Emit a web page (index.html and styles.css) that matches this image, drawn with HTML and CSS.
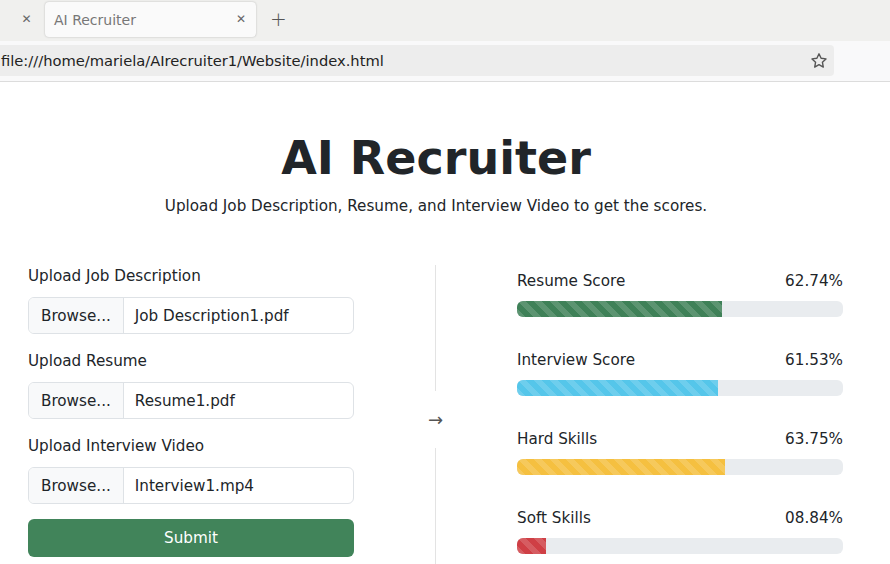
FILE: index.html
```html
<!DOCTYPE html>
<html lang="en">
<head>
<meta charset="utf-8">
<title>AI Recruiter</title>
<link rel="stylesheet" href="styles.css">
</head>
<body>
<div class="chrome">
  <div class="tabbar">
    <span class="tab-x prev">&#x2715;</span>
    <div class="tab">
      <span class="tab-title">AI Recruiter</span>
      <span class="tab-x">&#x2715;</span>
    </div>
    <span class="tab-plus">+</span>
  </div>
  <div class="navbar">
    <div class="urlbox">
      <span class="url">file:///home/mariela/AIrecruiter1/Website/index.html</span>
      <svg class="star" width="18" height="18" viewBox="0 0 18 18"><path d="M9 1.8l2.1 4.5 4.9.6-3.6 3.3.9 4.9L9 12.7l-4.3 2.4.9-4.9L2 6.9l4.9-.6z" fill="none" stroke="#555" stroke-width="1.4" stroke-linejoin="round"/></svg>
    </div>
  </div>
</div>

<main class="page">
  <header class="header">
    <h1 class="title">AI Recruiter</h1>
    <p class="subtitle">Upload Job Description, Resume, and Interview Video to get the scores.</p>
  </header>

  <div class="content">
    <form class="uploads">
      <label class="field-label">Upload Job Description</label>
      <div class="file-input"><span class="browse">Browse...</span><span class="fname">Job Description1.pdf</span></div>
      <label class="field-label">Upload Resume</label>
      <div class="file-input"><span class="browse">Browse...</span><span class="fname">Resume1.pdf</span></div>
      <label class="field-label">Upload Interview Video</label>
      <div class="file-input"><span class="browse">Browse...</span><span class="fname">Interview1.mp4</span></div>
      <button type="button" class="submit">Submit</button>
    </form>

    <div class="divider">
      <div class="vline top"></div>
      <span class="arrow">&#8594;</span>
      <div class="vline bottom"></div>
    </div>

    <section class="scores">
      <div class="score">
        <div class="score-head"><span>Resume Score</span><span>62.74%</span></div>
        <div class="progress"><div class="bar green" style="width:62.74%"></div></div>
      </div>
      <div class="score">
        <div class="score-head"><span>Interview Score</span><span>61.53%</span></div>
        <div class="progress"><div class="bar blue" style="width:61.53%"></div></div>
      </div>
      <div class="score">
        <div class="score-head"><span>Hard Skills</span><span>63.75%</span></div>
        <div class="progress"><div class="bar yellow" style="width:63.75%"></div></div>
      </div>
      <div class="score">
        <div class="score-head"><span>Soft Skills</span><span>08.84%</span></div>
        <div class="progress"><div class="bar red" style="width:8.84%"></div></div>
      </div>
    </section>
  </div>
</main>
</body>
</html>
```

FILE: styles.css
```css
* { box-sizing: border-box; }
html, body { margin: 0; padding: 0; }
body {
  font-family: "DejaVu Sans", sans-serif;
  color: #212529;
  background: #fff;
  width: 890px;
  height: 564px;
  overflow: hidden;
}

/* browser chrome */
.chrome { background: #f0f0ee; }
.tabbar {
  height: 41px;
  display: flex;
  align-items: flex-start;
  padding-top: 2px;
}
.tab-x { font-size: 12px; color: #666; line-height: 35px; }
.tab-x.prev { width: 45px; text-align: center; padding-left: 8px; }
.tab {
  width: 211px;
  height: 35px;
  background: #fafafa;
  border-radius: 4px;
  box-shadow: 0 0 2px rgba(0,0,0,.25);
  display: flex;
  align-items: center;
  justify-content: space-between;
  padding: 0 10px 0 9px;
}
.tab-title { font-size: 14px; color: #777; }
.tab-plus { font-size: 20px; color: #555; line-height: 35px; margin-left: 14px; font-weight: 300; }
.navbar {
  height: 41px;
  background: #f9f9fa;
  border-bottom: 1px solid #dcdcdc;
  padding: 4px 56px 4px 0;
}
.urlbox {
  height: 31px;
  background: #ededed;
  border-radius: 0 4px 4px 0;
  display: flex;
  align-items: center;
  justify-content: space-between;
  padding: 0 6px 0 1px;
}
.url { font-size: 14.7px; color: #222; }
.star { display: block; }

/* page */
.page { padding: 0 18px 0 0; }
.header { text-align: center; padding-top: 49px; }
.title {
  margin: 0;
  font-size: 46px;
  line-height: 55px;
  font-weight: 700;
}
.subtitle {
  margin: 8px 0 0;
  font-size: 15.2px;
  line-height: 24px;
}
.content {
  display: flex;
  margin-top: 46px;
  padding-left: 28px;
}
.uploads { width: 326px; display: flex; flex-direction: column; }
.field-label { font-size: 15.2px; line-height: 24px; margin-bottom: 9px; }
.file-input {
  height: 37px;
  border: 1px solid #dee2e6;
  border-radius: 6px;
  display: flex;
  align-items: center;
  font-size: 15.2px;
  margin-bottom: 15px;
  overflow: hidden;
}
.browse {
  height: 100%;
  display: flex;
  align-items: center;
  padding: 0 12px;
  background: #f8f9fa;
  border-right: 1px solid #dee2e6;
}
.fname { padding-left: 11px; }
.submit {
  margin-top: 0;
  height: 38px;
  background: #41845a;
  color: #fff;
  border: 0;
  border-radius: 6px;
  font-family: inherit;
  font-size: 15.2px;
}

.divider {
  width: 163px;
  display: flex;
  flex-direction: column;
  align-items: center;
  margin-top: 1px;
}
.vline { width: 1px; background: #e3e3e3; }
.vline.top { height: 126px; }
.vline.bottom { flex: 1; height: 120px; }
.arrow { font-size: 18px; line-height: 57px; color: #555; }

.scores { width: 326px; padding-top: 5px; }
.score { margin-bottom: 31px; }
.score-head {
  display: flex;
  justify-content: space-between;
  font-size: 15.2px;
  line-height: 24px;
  margin-bottom: 8px;
}
.progress {
  height: 16px;
  background: #e9ecef;
  border-radius: 6px;
  overflow: hidden;
}
.bar {
  height: 100%;
  background-image: linear-gradient(45deg, rgba(255,255,255,.15) 25%, transparent 25%, transparent 50%, rgba(255,255,255,.15) 50%, rgba(255,255,255,.15) 75%, transparent 75%, transparent);
  background-size: 16px 16px;
}
.green { background-color: #3f8158; }
.blue { background-color: #55c6ea; }
.yellow { background-color: #f5c040; }
.red { background-color: #cf3f45; }
```
